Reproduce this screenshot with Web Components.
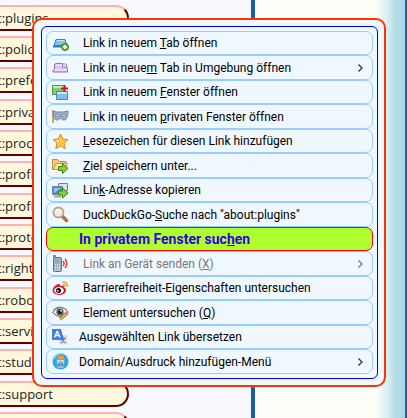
<!DOCTYPE html>
<html lang="de">
<head>
<meta charset="utf-8">
<title>about:about</title>
<style>
  html, body {
    margin: 0;
    height: 100%;
    overflow: hidden;
  }
  body {
    font-family: "Open Sans", "Noto Sans", sans-serif;
    font-size: 12px;
    color: #000;
  }
  context-menu {
    font-family: Roboto, "Open Sans", sans-serif;
  }
</style>
</head>
<body>
<about-page>
  <about-link>t:plugins</about-link>
  <about-link>t:policies</about-link>
  <about-link>t:preferences</about-link>
  <about-link>t:privatebrowsing</about-link>
  <about-link>t:processes</about-link>
  <about-link>t:profiles</about-link>
  <about-link>t:profiling</about-link>
  <about-link>t:protections</about-link>
  <about-link>t:rights</about-link>
  <about-link>t:robots</about-link>
  <about-link>t:serviceworkers</about-link>
  <about-link>t:studies</about-link>
  <about-link>t:support</about-link>
  <about-link></about-link>
</about-page>

<context-menu>
  <menu-entry>
    <svg slot="icon" viewBox="0 0 17 17">
      <path d="M4 4.500h9l2 6H2z" fill="#7fc4ee" stroke="#3f7eac"/>
      <path d="M5 5.500h7" stroke="#c8eafc"/>
      <path d="M1 11.500h14" stroke="#3f7eac" stroke-width="2"/>
      <circle cx="13" cy="12" r="3.500" fill="#78b82c" stroke="#3d7d12"/>
      <path d="M11 12h4M13 10v4" stroke="#fff" stroke-width="1.500"/>
    </svg>
    Link in neuem <u>T</u>ab öffnen
  </menu-entry>
  <menu-entry submenu>
    <svg slot="icon" viewBox="0 0 17 17">
      <path d="M2.500 11V6q0-1.500 1.500-1.500h6q1.500 0 1.500 2V8h3q1 0 1 1.500V13H1v-2z" fill="#d9c5ef" stroke="#9274ae"/>
      <path d="M4 6h6M2 11h13" stroke="#f5ecff"/>
      <path d="M10.500 5h3q1 0 1 1v2h-4z" fill="#f5edfb" stroke="#9b84b3"/>
    </svg>
    Link in neue<u>m</u> Tab in Umgebung öffnen
  </menu-entry>
  <menu-entry>
    <svg slot="icon" viewBox="0 0 17 17">
      <path d="M.500 1.500h12v9H.500z" fill="#7bcf6c" stroke="#55914d"/>
      <path d="M1 3h11" stroke="#c1edb5" stroke-width="2"/>
      <path d="M4.500 7.500h11v8h-11z" fill="#83bdf4" stroke="#4d83b9"/>
      <path d="M5 9h10" stroke="#c9e5ff" stroke-width="2"/>
      <path d="M12.500 1v7M9 4.500h7" stroke="#d51414" stroke-width="2"/>
    </svg>
    Link in neuem <u>F</u>enster öffnen
  </menu-entry>
  <menu-entry>
    <svg slot="icon" viewBox="0 0 17 17">
      <path d="M1 2v13" stroke="#c4913b" stroke-width="1.600"/>
      <path d="M1 3q4 1.500 7 1 4 .5 8-1 0 7-3 9-3 .5-4.500-2Q7 12.500 4 12 1 10 1 3z" fill="#9db0c5" stroke="#71859c"/>
      <path d="M3 7q2.500-1.500 4.500 1Q5 9.500 3 7zM9.500 8q2-2.500 4.500-1-1.500 2.500-4.500 1z" fill="#f5faff" stroke="#5c7086" stroke-width=".7"/>
    </svg>
    Link in neuem <u>p</u>rivaten Fenster öffnen
  </menu-entry>
  <menu-entry>
    <svg slot="icon" viewBox="0 0 17 17">
      <path d="M8.500 1l2.200 5 5.300.6-4 3.600 1.200 5.500-4.700-2.900-4.700 2.900L5 10.200 1 6.600 6.300 6z" fill="#ffc83e" stroke="#d98919"/>
      <path d="M8.500 3L7 7 3.500 7.500l3 2.300" fill="#ffe691"/>
    </svg>
    <u>L</u>esezeichen für diesen Link hinzufügen
  </menu-entry>
  <menu-entry>
    <svg slot="icon" viewBox="0 0 17 17">
      <path d="M.500 12.500v-10h5l1.500 2h7v8z" fill="#f4cc7c" stroke="#c18b38"/>
      <path d="M1.500 12.500L4 6.500h11.500l-2 6z" fill="#ffe7aa" stroke="#c99443"/>
      <path d="M6.500 9.500h4v-3l5.500 5-5.500 5v-3h-4z" fill="#89cf30" stroke="#39870f"/>
    </svg>
    <u>Z</u>iel speichern unter...
  </menu-entry>
  <menu-entry>
    <svg slot="icon" viewBox="0 0 17 17">
      <path d="M6.500 1.500h9v7h-9z" fill="#d5e6f5" stroke="#71859a"/>
      <path d="M.500 4.500h10v8H.500z" fill="#3e93d4" stroke="#71859a"/>
      <path d="M2 6h7l-7 5z" fill="#8acbf5"/>
      <path d="M2 14.500h7" stroke="#97a3af" stroke-width="2"/>
      <path d="M6.500 9h4V6l5.500 5-5.500 5v-3h-4z" fill="#89cf30" stroke="#39870f"/>
    </svg>
    Lin<u>k</u>-Adresse kopieren
  </menu-entry>
  <menu-entry>
    <svg slot="icon" viewBox="0 0 17 17">
      <path d="M10 10l4.500 4.500" stroke="#a86f4a" stroke-width="3.500" stroke-linecap="round"/>
      <circle cx="6.500" cy="6.500" r="5" fill="#e5edf5" stroke="#c4a07c" stroke-width="1.800"/>
      <path d="M3.500 6q.5-2.500 3-2.500" fill="none" stroke="#fff" stroke-width="1.500"/>
    </svg>
    DuckDuckGo-<u>S</u>uche nach "about:plugins"
  </menu-entry>
  <menu-entry highlight>In privatem Fenster suc<u>h</u>en</menu-entry>
  <menu-entry submenu disabled>
    <svg slot="icon" viewBox="0 0 17 17">
      <path d="M2.500 0v4" stroke="#56616b" stroke-width="2"/>
      <rect x="1.500" y="2.500" width="8" height="14" rx="1" fill="#a5b0ba" stroke="#65717c"/>
      <path d="M3 4.500h5v3H3z" fill="#63b3ef"/>
      <path d="M3 10h5M3 12.500h5M3 15h5" stroke="#fff" stroke-dasharray="1 1"/>
      <path d="M11 6q2 2.500 0 5" fill="none" stroke="#e5414c" stroke-width="1.600"/>
      <path d="M13 4q3.500 4.500 0 9" fill="none" stroke="#e5414c" stroke-width="1.600"/>
    </svg>
    Link an Gerät senden (<u>X</u>)
  </menu-entry>
  <menu-entry>
    <svg slot="icon" viewBox="0 0 17 17">
      <path d="M6.500 4q2-.5 1.500 2 4.500-1.500 4 1.500 2.500 1 2 3.500-1.500 4-7 4-6.500-.5-6.500-5Q2 5 6.500 4z" fill="#df1828"/>
      <ellipse cx="7" cy="10.500" rx="4.800" ry="3.500" fill="#fff"/>
      <circle cx="6.500" cy="10.500" r="2.500" fill="#111"/>
      <circle cx="5.800" cy="10.800" r=".9" fill="#fff"/>
      <path d="M10.500 2q5-.5 5 5M11 4.500q2.300 0 2.300 2.300" fill="none" stroke="#f39a28" stroke-width="1.400"/>
    </svg>
    Barrierefreiheit-Eigenschaften untersuchen
  </menu-entry>
  <menu-entry>
    <svg slot="icon" viewBox="0 0 17 17">
      <path d="M.500 8.500q3-5 8-5t7.500 5q-3 4-7.500 4t-8-4z" fill="#e7e7e7" stroke="#686868"/>
      <path d="M1 6q6-6 14 0" fill="none" stroke="#8b8b8b"/>
      <circle cx="8" cy="8" r="3.600" fill="#606060"/>
      <circle cx="8" cy="8" r="1.800" fill="#111"/>
      <circle cx="9" cy="6.800" r=".9" fill="#fff"/>
      <path d="M8 15l6-5" stroke="#80621f" stroke-width="3"/>
      <path d="M8 15l6-5" stroke="#ffd95f" stroke-width="1.500"/>
      <path d="M14 10l1.500-1.200" stroke="#dc6d66" stroke-width="3"/>
    </svg>
    Element untersuchen (<u>Q</u>)
  </menu-entry>
  <menu-entry flush>
    <svg slot="icon" viewBox="0 0 17 17">
      <path d="M6 6h9.500v9.500H8z" fill="#dce2e8"/>
      <path d="M8 9h6M11 7.500V9M13 9q-1 3-4.500 5M9 10q1.500 3 5 4" fill="none" stroke="#77889b" stroke-width="1.200"/>
      <path d="M0 0h9l3 11H0z" fill="#477de0"/>
      <path d="M2.500 8.500L5 2.500h.5L8 8.500M3.500 6.500H7" fill="none" stroke="#fff" stroke-width="1.300"/>
    </svg>
    Ausgewählten Link übersetzen
  </menu-entry>
  <menu-entry flush submenu>
    <svg slot="icon" viewBox="0 0 17 17">
      <circle cx="8.500" cy="8.500" r="8" fill="#27a9e5"/>
      <path d="M2 6q2-5 6-5" fill="none" stroke="#7dd5f8" stroke-width="1.500"/>
      <path d="M4.500 6.500h8l-1 8.500h-6z" fill="#b8def0" stroke="#5aa3c9" stroke-width=".7"/>
      <path d="M5 6l1-3.500 2 .5 1.500-2 2 2 1 3z" fill="#ef9c2c"/>
      <path d="M8.500 8.500l2 3h-4zM6.500 10.500l-.3 2.500h4.600l-.3-2.500" fill="none" stroke="#326b8d" stroke-width=".8"/>
    </svg>
    Domain/Ausdruck hinzufügen-Menü
  </menu-entry>
</context-menu>

<script>
class AboutPage extends HTMLElement {
  constructor() {
    super();
    this.attachShadow({ mode: 'open' });
  }

  connectedCallback() {
    this.shadowRoot.innerHTML = `
      <style>
        :host {
          display: flex;
          height: 100%;
          overflow: hidden;
        }
        nav {
          box-sizing: border-box;
          width: 251px;
          flex: none;
          padding-top: 5px;
          background: #f8f8ff;
        }
        ::slotted(about-link) {
          margin-bottom: 5px;
        }
        ::slotted(about-link:nth-child(3n)) {
          margin-bottom: 6px;
        }
        main {
          flex: 1;
          border: solid #1a5fab;
          border-width: 0 2px 0 4px;
          background: linear-gradient(to left, #a8d8e4 0, #b4dde6 10px, #d8eef0 17px, #fffffa 30px);
        }
      </style>
      <nav><slot></slot></nav>
      <main></main>
    `;
  }
}

class AboutLink extends HTMLElement {
  constructor() {
    super();
    this.attachShadow({ mode: 'open' });
  }

  connectedCallback() {
    this.shadowRoot.innerHTML = `
      <style>
        :host {
          display: block;
          width: 129px;
        }
        a {
          display: block;
          box-sizing: border-box;
          height: 26px;
          margin-left: -16px;
          padding-left: 11px;
          border: 2px solid;
          border-color: #ffb0b0 #600000 #600000 #ffb0b0;
          border-radius: 13px;
          background: #fff8dc;
          color: #222;
          font-size: 13px;
          line-height: 22px;
          text-decoration: none;
          white-space: nowrap;
          overflow: hidden;
        }
      </style>
      <a href="#"><slot></slot></a>
    `;
  }
}

class ContextMenu extends HTMLElement {
  constructor() {
    super();
    this.attachShadow({ mode: 'open' });
  }

  connectedCallback() {
    this.shadowRoot.innerHTML = `
      <style>
        :host {
          position: absolute;
          top: 18px;
          left: 32px;
          right: 21px;
          box-sizing: border-box;
          padding: 6px 6px 6px 7px;
          border: 2px solid #ff3300;
          border-radius: 10px;
          background: #f0f8ff;
        }
        div {
          padding: 4px;
          border: 1px solid #0000f0;
          border-radius: 6px;
        }
        ::slotted(menu-entry) {
          height: 24px;
        }
        ::slotted(menu-entry:nth-child(even)) {
          height: 25px;
        }
      </style>
      <div role="menu"><slot></slot></div>
    `;
  }
}

class MenuEntry extends HTMLElement {
  constructor() {
    super();
    this.attachShadow({ mode: 'open' });
  }

  connectedCallback() {
    const disabled = this.hasAttribute('disabled') ? 'disabled' : '';
    const arrow = this.hasAttribute('submenu')
      ? '<svg class="arrow" viewBox="0 0 5 8"><path d="M.5 .5L4 4 .5 7.500" fill="none" stroke="currentColor" stroke-width="1.300"/></svg>'
      : '';
    this.shadowRoot.innerHTML = `
      <style>
        :host {
          display: block;
        }
        button {
          display: flex;
          align-items: center;
          box-sizing: border-box;
          width: 100%;
          height: 100%;
          margin: 0;
          padding: 0 9px 0 5px;
          border: 1px solid #99ccff;
          border-radius: 7px;
          background: #f0f8ff;
          color: #000;
          font: inherit;
          text-align: left;
        }
        .icon {
          display: flex;
          flex: none;
          width: 31px;
        }
        ::slotted(svg) {
          width: 17px;
          height: 17px;
          fill: none;
        }
        .label {
          flex: 1;
          white-space: nowrap;
        }
        .arrow {
          width: 5px;
          height: 8px;
          color: #333;
        }
        :host([flush]) .icon,
        :host([highlight]) .icon {
          width: 27px;
        }
        :host([highlight]) button {
          border-color: #ff0000;
          background: #adff2f;
          color: #3300e0;
          font-size: 14px;
          font-weight: bold;
        }
        :host([disabled]) button,
        :host([disabled]) .arrow {
          color: #777;
        }
      </style>
      <button type="button" role="menuitem" ${disabled}>
        <span class="icon"><slot name="icon"></slot></span>
        <span class="label"><slot></slot></span>
        ${arrow}
      </button>
    `;
  }
}

customElements.define('about-page', AboutPage);
customElements.define('about-link', AboutLink);
customElements.define('context-menu', ContextMenu);
customElements.define('menu-entry', MenuEntry);
</script>
</body>
</html>
